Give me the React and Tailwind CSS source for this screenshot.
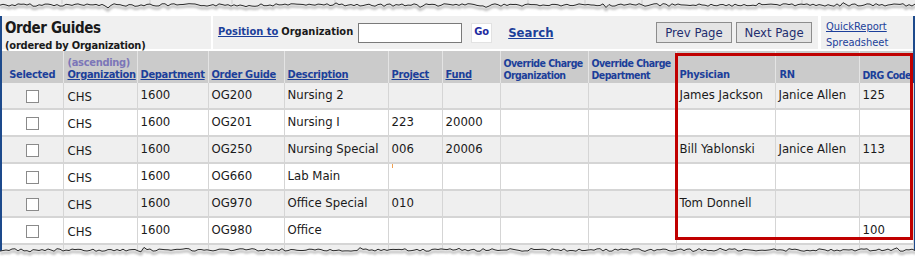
import React from 'react';

const cols = [61, 74, 71, 76, 104, 54, 58, 88, 88, 99, 84, 54];

const rows = [
  ['CHS', '1600', 'OG200', 'Nursing 2', '', '', '', '', 'James Jackson', 'Janice Allen', '125'],
  ['CHS', '1600', 'OG201', 'Nursing I', '223', '20000', '', '', '', '', ''],
  ['CHS', '1600', 'OG250', 'Nursing Special', '006', '20006', '', '', 'Bill Yablonski', 'Janice Allen', '113'],
  ['CHS', '1600', 'OG660', 'Lab Main', 'mark', '', '', '', '', '', ''],
  ['CHS', '1600', 'OG970', 'Office Special', '010', '', '', '', 'Tom Donnell', '', ''],
  ['CHS', '1600', 'OG980', 'Office', '', '', '', '', '', '', '100'],
  null,
];

// jagged "torn paper" edge
const jag = (seed, y0, amp) => {
  let s = seed;
  const rnd = () => {
    s = (s * 9301 + 49297) % 233280;
    return s / 233280;
  };
  const pts = [];
  for (let x = 0; x <= 918; x += 3) {
    const spike = rnd() > 0.9 ? (rnd() - 0.5) * amp * 1.8 : 0;
    pts.push([x, +(y0 + (rnd() - 0.5) * amp + spike).toFixed(1)]);
  }
  return pts;
};

const toStr = (pts, dy = 0) => pts.map(([x, y]) => `${x},${y + dy}`).join(' ');

const TopTear = () => {
  const pts = jag(7, 5, 2.6);
  return (
    <svg width="915" height="16" className="block">
      <defs>
        <filter id="tb" x="-5%" y="-100%" width="110%" height="300%">
          <feGaussianBlur stdDeviation="1.2" />
        </filter>
      </defs>
      <polygon points={`0,0 ${toStr(pts)} 918,0`} fill="#ececec" />
      {[62, 150, 232, 335, 528, 585, 642, 802].map((x) => (
        <line key={x} x1={x} y1="0" x2={x} y2="4" stroke="#cfcfcf" />
      ))}
      <polyline points={toStr(pts, 2.5)} fill="none" stroke="#8a8a8a" strokeWidth="2.5" opacity="0.55" filter="url(#tb)" />
      <polyline points={toStr(pts)} fill="none" stroke="#2a2a2a" strokeWidth="1" />
    </svg>
  );
};

const BottomTear = () => {
  const pts = jag(23, 3, 2.6);
  return (
    <svg width="915" height="15" className="absolute left-0 bottom-0 block">
      <defs>
        <filter id="bb" x="-5%" y="-100%" width="110%" height="300%">
          <feGaussianBlur stdDeviation="1.2" />
        </filter>
      </defs>
      <polygon points={`0,16 ${toStr(pts)} 918,16`} fill="#ffffff" />
      <polyline points={toStr(pts, 2.5)} fill="none" stroke="#8a8a8a" strokeWidth="2.5" opacity="0.55" filter="url(#bb)" />
      <polyline points={toStr(pts)} fill="none" stroke="#2a2a2a" strokeWidth="1" />
    </svg>
  );
};

const HeadLink = ({ children }) => (
  <span className="underline underline-offset-[1px] text-[#1c3f9a]">{children}</span>
);

const th = 'border-r border-[#e4e4e4] align-bottom pb-[2px] text-left font-bold whitespace-nowrap overflow-hidden';

export default function App() {
  return (
    <div className="relative w-[915px] h-[262px] overflow-hidden bg-white font-['DejaVu_Sans_Condensed','Liberation_Sans',sans-serif] text-[#1a1a1a]">
      <TopTear />

      <div className="border-x-2 border-[#1d4a8c] bg-white">
        {/* title bar */}
        <div className="flex h-[35px] bg-[#f0f0f0] border-b-2 border-white">
          <div className="w-[211px] border-r-2 border-white pl-[3px] pt-[5px] leading-none">
            <div className="text-[15px] font-bold tracking-[-0.4px]">Order Guides</div>
            <div className="text-[11px] font-bold mt-[4px] tracking-[-0.2px]">(ordered by Organization)</div>
          </div>
          <div className="flex flex-1 items-center pl-[5px]">
            <span className="text-[11px] font-bold underline text-[#1c3f9a]">Position to</span>
            <span className="text-[11px] font-bold ml-[3px]">Organization</span>
            <div className="ml-[5px] w-[104px] h-[20px] border border-[#7a7a7a] bg-white" />
            <div className="ml-[9px] w-[21px] h-[20px] bg-white border border-[#e2e2e2] flex items-center justify-center text-[11px] font-bold text-[#1e2aa0]">
              Go
            </div>
            <span className="ml-[16px] text-[13px] font-bold underline text-[#1c3f9a]">Search</span>
            <div className="ml-auto flex gap-[4px] mr-[6px]">
              <div className="w-[76px] h-[21px] bg-[#e4e4e4] border border-[#8c8c8c] flex items-center justify-center text-[13px] text-[#1f2d6e]">
                Prev Page
              </div>
              <div className="w-[76px] h-[21px] bg-[#e4e4e4] border border-[#8c8c8c] flex items-center justify-center text-[13px] text-[#1f2d6e]">
                Next Page
              </div>
            </div>
          </div>
          <div className="w-[95px] border-l-[3px] border-white pl-[5px] pt-[4px] text-[11px] leading-[13px] text-[#1c3f9a] overflow-hidden">
            <div className="underline">QuickReport</div>
            <div className="mt-[3px] whitespace-nowrap">Spreadsheet</div>
          </div>
        </div>

        {/* table */}
        <table className="table-fixed border-collapse w-[911px]">
          <colgroup>
            {cols.map((w, i) => (
              <col key={i} style={{ width: w }} />
            ))}
          </colgroup>
          <thead>
            <tr className="h-[32px] bg-[#cbcbcb] text-[11px] font-bold leading-[12px] tracking-[-0.3px] text-[#1c3f9a]">
              <th className={`${th} text-center`}>
                <div className="text-center">Selected</div>
              </th>
              <th className={`${th} pl-[4px]`}>
                <div className="text-[#7c76b8]">(ascending)</div>
                <HeadLink>Organization</HeadLink>
              </th>
              <th className={`${th} pl-[3px]`}><HeadLink>Department</HeadLink></th>
              <th className={`${th} pl-[3px]`}><HeadLink>Order Guide</HeadLink></th>
              <th className={`${th} pl-[3px]`}><HeadLink>Description</HeadLink></th>
              <th className={`${th} pl-[3px]`}><HeadLink>Project</HeadLink></th>
              <th className={`${th} pl-[3px]`}><HeadLink>Fund</HeadLink></th>
              <th className={`${th} pl-[3px] text-[10.5px] tracking-[-0.55px]`}>
                Override Charge
                <br />
                Organization
              </th>
              <th className={`${th} pl-[3px] text-[10.5px] tracking-[-0.55px]`}>
                Override Charge
                <br />
                Department
              </th>
              <th className={`${th} pl-[3px]`}>Physician</th>
              <th className={`${th} pl-[4px]`}>RN</th>
              <th className="align-bottom pb-[2px] pl-[3px] text-left font-bold whitespace-nowrap overflow-hidden text-[10.5px] tracking-[-0.55px]">
                DRG Code
              </th>
            </tr>
          </thead>
          <tbody className="text-[13px]">
            {rows.map((r, i) => (
              <tr
                key={i}
                className={`${i === 0 ? 'h-[26px]' : 'h-[27px]'} ${i % 2 === 0 ? 'bg-[#efefef]' : 'bg-white'}`}
              >
                <td className="border-r border-b-2 border-[#d5d5d5] align-middle">
                  {r && <div className="w-[13px] h-[13px] mx-auto mt-[2px] border border-[#8a8a8a] bg-white" />}
                </td>
                {(r ? r : Array(11).fill('')).map((c, j) => (
                  <td
                    key={j}
                    className={`border-r border-b-2 border-[#d5d5d5] whitespace-nowrap overflow-hidden leading-[16px] ${
                      j === 0 ? 'pl-[4px] pt-[2px]' : 'pl-[3px] pb-[2px]'
                    }`}
                  >
                    {c === 'mark' ? (
                      <span className="inline-block w-[1px] h-[4px] bg-[#f0a050] align-top mt-[-4px]" />
                    ) : (
                      c
                    )}
                  </td>
                ))}
              </tr>
            ))}
          </tbody>
        </table>
      </div>

      {/* highlight */}
      <div className="absolute left-[675px] top-[53px] w-[238px] h-[187px] border-[3px] border-[#c00000]" />

      <BottomTear />
    </div>
  );
}
